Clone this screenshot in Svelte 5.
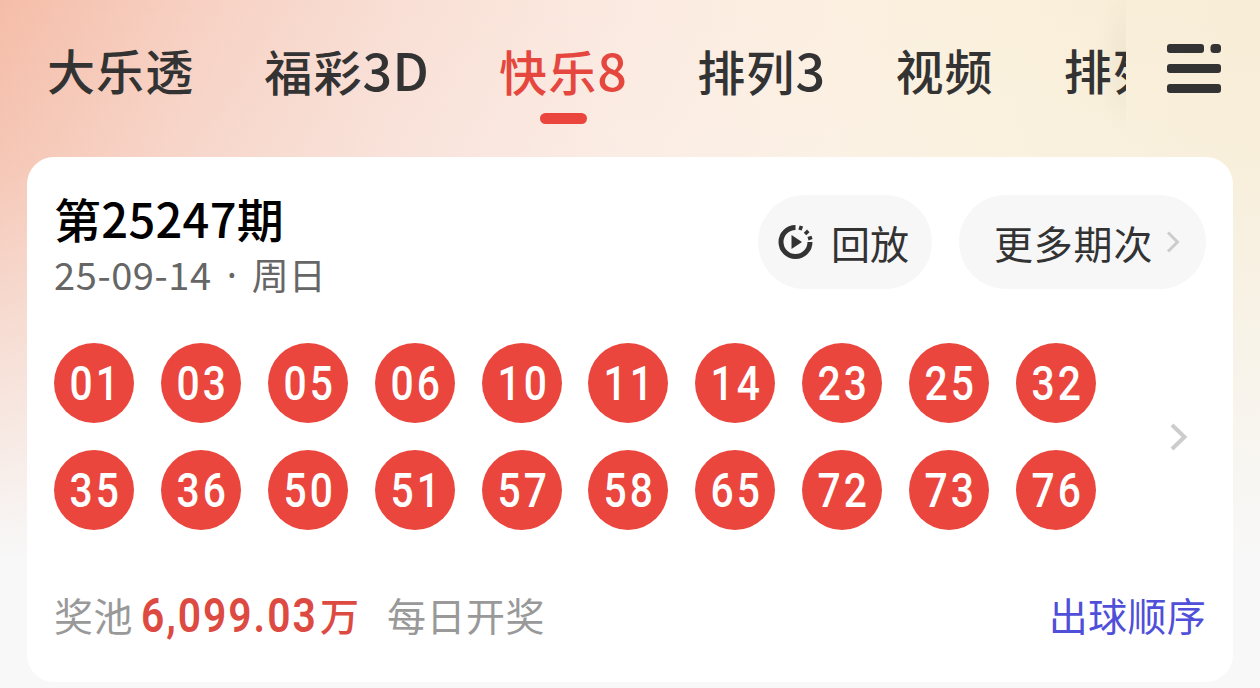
<script lang="ts">
	let active = 2;

	const tabs = [
		{ label: '大乐透', suffix: '' },
		{ label: '福彩', suffix: '3D' },
		{ label: '快乐', suffix: '8' },
		{ label: '排列', suffix: '3' },
		{ label: '视频', suffix: '' },
		{ label: '排列', suffix: '' }
	];

	const balls = [
		'01', '03', '05', '06', '10', '11', '14', '23', '25', '32',
		'35', '36', '50', '51', '57', '58', '65', '72', '73', '76'
	];
</script>

<div class="page">
	<header class="header">
		<nav class="tabs">
			{#each tabs as tab, i}
				<button class="tab" class:active={i === active} on:click={() => (active = i)}>
					<span>{tab.label}</span>{#if tab.suffix}<span class="suffix">{tab.suffix}</span>{/if}
				</button>
			{/each}
		</nav>
		<button class="menu" aria-label="全部彩种">
			<svg width="54" height="50" viewBox="0 0 54 50" fill="#333">
				<rect width="37" height="9" rx="3" />
				<rect x="43.500" width="10.500" height="9" rx="3.500" />
				<rect y="20" width="54" height="9" rx="3" />
				<rect y="40" width="54" height="9" rx="3" />
			</svg>
		</button>
	</header>

	<section class="card">
		<div class="top">
			<div class="issue">
				<h1>第25247期</h1>
				<p><span class="date">25-09-14</span><span class="dot">·</span><span class="weekday">周日</span></p>
			</div>
			<div class="actions">
				<button class="pill replay">
					<svg width="36" height="36" viewBox="0 0 36 36">
						<path d="M17.500 3.500A14.500 14.500 0 1 0 32 18" fill="none" stroke="#333" stroke-width="5" />
						<path d="M22 6l1.400-4M27 10l3.300-3.100M30 14.700l4-1.300" fill="none" stroke="#333" stroke-width="3.600" />
						<path d="M13.500 11v14L24 18z" fill="#333" />
					</svg>
					<span>回放</span>
				</button>
				<button class="pill more">
					<span>更多期次</span>
					<svg width="14" height="22" viewBox="0 0 14 22" fill="none" stroke="#ccc" stroke-width="3">
						<path d="M2 1.500l9.500 9.500L2 20.500" />
					</svg>
				</button>
			</div>
		</div>

		<div class="result">
			<div class="balls">
				{#each balls as ball}
					<div class="ball"><span>{ball}</span></div>
				{/each}
			</div>
			<svg class="arrow" width="18" height="28" viewBox="0 0 18 28" fill="none" stroke="#ccc" stroke-width="4">
				<path d="M2 2l12.500 12L2 26" />
			</svg>
		</div>

		<footer class="footer">
			<span class="muted">奖池</span>
			<span class="amount">6,099.03</span>
			<span class="unit">万</span>
			<span class="muted daily">每日开奖</span>
			<a class="order" href="#order">出球顺序</a>
		</footer>
	</section>
</div>

<style>
	:global(body) {
		overflow: hidden;
	}

	.page {
		box-sizing: border-box;
		width: 1260px;
		height: 688px;
		padding: 0 27px;
		overflow: hidden;
		font-family: 'Noto Sans CJK SC', sans-serif;
		color: #333;
		background:
			linear-gradient(180deg, rgba(248, 248, 248, 0) 0, rgba(248, 248, 248, 0.15) 160px, #f8f8f8 560px),
			linear-gradient(94deg, #f5bda8 0, #f7d0c2 190px, #f9dfd5 400px, #fbeae1 620px, #fcf0e1 840px, #faf0db 1000px, #f8edd6 1240px);
	}

	button {
		padding: 0;
		border: 0;
		background: none;
		font: inherit;
		color: inherit;
	}

	.header {
		display: flex;
		height: 157px;
	}

	.tabs {
		display: flex;
		gap: 70px;
		flex: none;
		box-sizing: border-box;
		width: 1099px;
		padding-left: 20px;
		overflow: hidden;
		background: radial-gradient(ellipse 30px 75px at 1099px 60px, rgba(110, 110, 80, 0.07), transparent);
	}

	.tab {
		display: flex;
		flex: none;
		align-items: baseline;
		position: relative;
		height: 138px;
		font-size: 48px;
		font-weight: 500;
		letter-spacing: 1.1px;
		line-height: 138px;
		white-space: nowrap;
	}

	.suffix {
		font-size: 52px;
		letter-spacing: 0.3px;
	}

	.active {
		color: #e5473f;
	}

	.active::after {
		content: '';
		position: absolute;
		top: 113px;
		left: 50%;
		width: 47px;
		height: 11px;
		margin-left: -23px;
		border-radius: 6px;
		background: #ea463d;
	}

	.menu {
		display: flex;
		align-items: flex-start;
		padding: 44px 0 0 41px;
	}

	.card {
		box-sizing: border-box;
		height: 525px;
		padding: 0 27px;
		border-radius: 27px;
		background: #fff;
	}

	.top {
		display: flex;
		justify-content: space-between;
		height: 186px;
	}

	.issue {
		padding-top: 31px;
	}

	h1 {
		margin: 0;
		font-size: 47px;
		font-weight: 500;
		letter-spacing: 0.3px;
		line-height: 60px;
		color: #000;
	}

	p {
		display: flex;
		margin: 0;
		font-size: 38px;
		line-height: 52px;
		color: #666;
	}

	.date {
		letter-spacing: 0.6px;
	}

	.dot {
		width: 40px;
		font-family: 'Noto Sans', sans-serif;
		text-align: center;
	}

	.weekday {
		font-size: 37px;
	}

	.actions {
		display: flex;
		gap: 27px;
		padding-top: 38px;
	}

	.pill {
		display: flex;
		align-items: center;
		box-sizing: border-box;
		height: 94px;
		border-radius: 47px;
		background: #f7f7f7;
		font-size: 39px;
	}

	.replay {
		gap: 17px;
		width: 174px;
		padding-left: 20px;
	}

	.more {
		gap: 13px;
		width: 247px;
		padding-left: 35px;
		letter-spacing: 0.8px;
	}

	.result {
		display: flex;
		align-items: center;
		height: 187px;
	}

	.balls {
		display: grid;
		grid-template-columns: repeat(10, 80px);
		gap: 27px 26.900px;
	}

	.ball {
		display: flex;
		align-items: center;
		justify-content: center;
		height: 80px;
		border-radius: 50%;
		background: #ea463d;
		font-family: Roboto, sans-serif;
		font-size: 48px;
		font-weight: 500;
		color: #fff;
	}

	.ball span {
		letter-spacing: 3.5px;
		margin-right: -3.5px;
		transform: scaleX(0.85);
	}

	.arrow {
		margin-left: 74px;
	}

	.footer {
		display: flex;
		align-items: center;
		height: 60px;
		margin-top: 54px;
		font-size: 39px;
	}

	.muted {
		color: #999;
		letter-spacing: 0.5px;
	}

	.amount {
		width: 180px;
		margin-left: 8px;
		padding-top: 2px;
		font-family: Roboto, sans-serif;
		font-size: 48px;
		font-weight: 600;
		letter-spacing: 2.3px;
		color: #dd4a42;
		transform: scaleX(0.85);
		transform-origin: left;
	}

	.unit {
		margin-left: -1px;
		font-weight: 500;
		color: #dd4a42;
	}

	.daily {
		margin-left: 28px;
	}

	.order {
		margin-left: auto;
		letter-spacing: 0.3px;
		color: #4f4fd9;
		text-decoration: none;
	}
</style>
